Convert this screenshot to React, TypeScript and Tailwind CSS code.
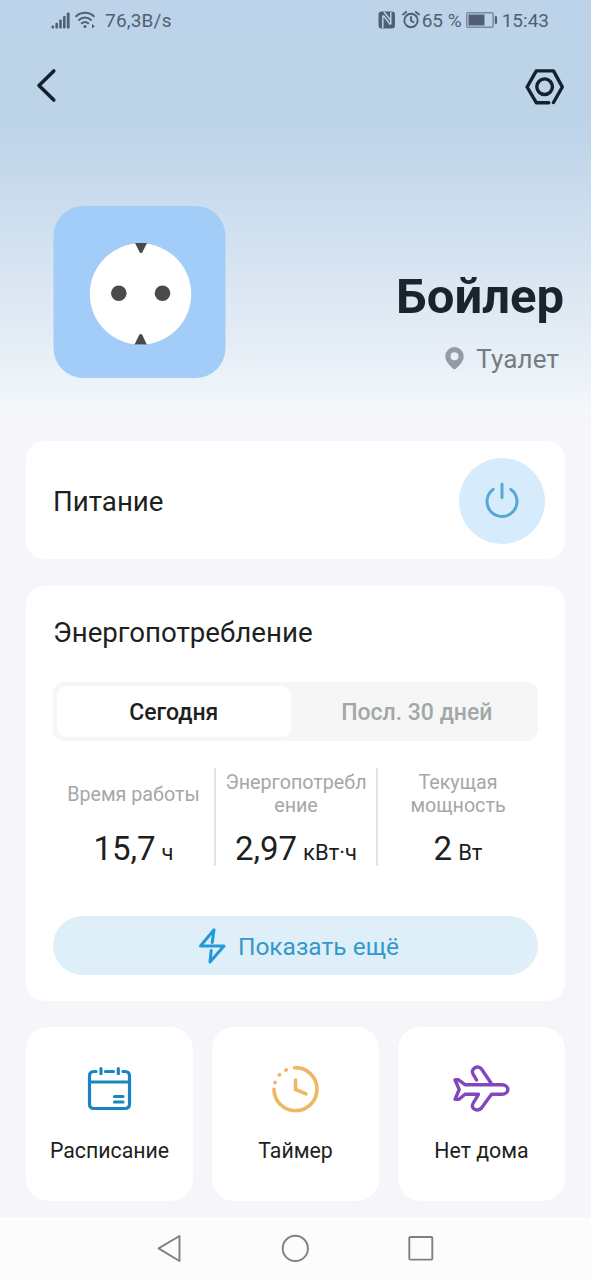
import type { ReactNode } from 'react';

function StatusBar() {
  return (
    <div className="flex h-10 items-center justify-between pr-[42px] pl-[51px] text-[#506072]">
      <div className="flex items-center">
        <svg width="20" height="18" viewBox="0 0 20 18" fill="currentColor">
          <rect x="0.5" y="14.5" width="2.6" height="3" rx="1" />
          <rect x="4.4" y="11.8" width="2.6" height="5.7" rx="1" />
          <rect x="8.2" y="8.6" width="2.6" height="8.9" rx="1" />
          <rect x="12" y="5" width="2.6" height="12.5" rx="1" />
          <rect x="15.8" y="1.5" width="2.8" height="16" rx="1" />
        </svg>
        <svg
          className="ml-1"
          width="21"
          height="18"
          viewBox="0 0 21 18"
          fill="none"
          stroke="currentColor"
          strokeWidth="2"
          strokeLinecap="round"
        >
          <path d="M1.2 5.2a13 13 0 0 1 17.6 0" />
          <path d="M4 8.9a9 9 0 0 1 12 0" />
          <path d="M6.8 12.3a5 5 0 0 1 6.4 0" />
          <circle cx="10" cy="15.6" r="1.5" fill="currentColor" stroke="none" />
          <path d="M17 13v4.5l2.8-2.2z" fill="currentColor" stroke="none" />
        </svg>
        <span className="ml-[9px] text-[19px] leading-none tracking-[0.2px]">
          76,3B/s
        </span>
      </div>

      <div className="flex items-center">
        <svg width="18" height="18" viewBox="0 0 18 18">
          <rect
            x="0.5"
            y="0.5"
            width="16.5"
            height="17"
            rx="3"
            fill="currentColor"
          />
          <path
            d="M4.8 17V4.5M5.3 4.5l7 9M12.8 1v12.5M6 1l6.5 8"
            fill="none"
            stroke="#bdd3e9"
            strokeWidth="1.4"
          />
        </svg>
        <svg
          className="ml-[6px]"
          width="18"
          height="18"
          viewBox="0 0 18 18"
          fill="none"
          stroke="currentColor"
          strokeWidth="1.9"
          strokeLinecap="round"
        >
          <circle cx="9" cy="9.5" r="6.7" />
          <path d="M9 6V9.5l2.4 1.8" />
          <path d="M1 3.5 4.2 1M17 3.5 13.8 1" />
        </svg>
        <span className="ml-0.5 text-[19px] leading-none">65 %</span>
        <svg className="ml-1" width="31" height="16" viewBox="0 0 31 16">
          <rect
            x="0.8"
            y="0.8"
            width="26.4"
            height="14.4"
            rx="1.5"
            fill="none"
            stroke="#7c8c9c"
            strokeWidth="1.5"
          />
          <rect x="2.5" y="2.5" width="16" height="11" fill="currentColor" />
          <rect
            x="28.8"
            y="4"
            width="2.2"
            height="8"
            rx="1"
            fill="currentColor"
          />
        </svg>
        <span className="ml-[5px] text-[19px] leading-none">15:43</span>
      </div>
    </div>
  );
}

function Socket() {
  return (
    <svg width="173" height="173" viewBox="0 0 173 173">
      <rect x="0.5" width="172" height="172" rx="30" fill="#a2cdf9" />
      <circle cx="87.5" cy="88" r="50.7" fill="#fff" />
      <circle cx="65.8" cy="87.2" r="7.8" fill="#4a4a4a" />
      <circle cx="109.5" cy="87.2" r="7.8" fill="#4a4a4a" />
      <path d="M82 37h12l-4.600 9.200q-1.400 1.800-2.800 0z" fill="#4a4a4a" />
      <path d="M81.600 138.400h12.200l-4.600-9.600q-1.500-1.800-3 0z" fill="#4a4a4a" />
    </svg>
  );
}

type StatProps = {
  label: ReactNode;
  value: string;
  unit: string;
};

function Stat({ label, value, unit }: StatProps) {
  return (
    <div className="flex flex-col items-center">
      <div className="flex h-[52px] shrink-0 items-center text-center text-[19.7px] leading-[23px] text-[#a5a7a8]">
        <span className="whitespace-nowrap">{label}</span>
      </div>
      <p className="mt-[9px] leading-[40px] whitespace-nowrap text-[#1d1f20]">
        <span className="text-[33px]">{value}</span>
        <span className="ml-1.5 text-[22px]">{unit}</span>
      </p>
    </div>
  );
}

type TileProps = {
  label: string;
  children: ReactNode;
};

function Tile({ label, children }: TileProps) {
  return (
    <button className="flex h-[174px] w-[167px] flex-col items-center rounded-[22px] bg-white pt-[31px]">
      {children}
      <span className="mt-[15px] text-[21.3px] leading-[28px] whitespace-nowrap text-[#1d1f20]">
        {label}
      </span>
    </button>
  );
}

export default function App() {
  return (
    <div className="flex h-[1280px] w-[591px] flex-col overflow-hidden bg-[#f5f5fa] font-[Roboto,sans-serif]">
      <div className="h-[441px] bg-[linear-gradient(to_bottom,#bdd3e9_0px,#bdd3e8_120px,#d1e1f0_240px,#dee8f3_300px,#e6eef6_350px,#f3f8fb_412px,#f5f5fa_418px)]">
        <StatusBar />

        <header className="flex h-[92px] items-center justify-between pr-[27px] pl-9">
          <svg
            width="22"
            height="36"
            viewBox="0 0 22 36"
            fill="none"
            stroke="#14212d"
            strokeWidth="3.6"
            strokeLinecap="round"
            strokeLinejoin="round"
          >
            <path d="M17.8 3 3 17.5 17.8 32" />
          </svg>
          <svg
            width="40"
            height="38"
            viewBox="0 0 40 38"
            fill="none"
            stroke="#14212d"
            strokeWidth="3.4"
            strokeLinejoin="round"
            strokeLinecap="round"
          >
            <path d="M24.8 35.700H12.300L3.100 20 12.300 3.900h17.200L38.300 20l-8.800 15.500" />
            <circle cx="20.6" cy="19.7" r="7.8" />
          </svg>
        </header>

        <div className="mt-[74px] flex justify-between pr-[27px] pl-[53px]">
          <Socket />
          <div className="flex flex-col items-end pt-[61px]">
            <h1 className="text-[49px] leading-[60px] font-bold text-[#1b242c]">
              Бойлер
            </h1>
            <div className="mt-4 mr-[5px] flex items-center text-[26px] leading-[32px] tracking-[0.1px] text-[#757d83]">
              <svg
                className="mr-3"
                width="20"
                height="24"
                viewBox="0 0 20 24"
                fill="#949ba3"
              >
                <path
                  fillRule="evenodd"
                  d="M10.500 0A9.200 9.200 0 0 0 1.300 9.200c0 5.200 4.400 9.200 7.500 12.200q1.700 1.600 3.400 0C15.300 18.400 19.700 14.400 19.700 9.200A9.200 9.200 0 0 0 10.500 0Zm0 5.200a4 4 0 1 1 0 8 4 4 0 0 1 0-8Z"
                />
              </svg>
              Туалет
            </div>
          </div>
        </div>
      </div>

      <main className="flex flex-col px-[26px]">
        <section className="flex h-[118px] items-center justify-between rounded-[18px] bg-white pr-5 pl-[27px]">
          <h2 className="pt-1 text-[27.7px] text-[#1d1f20]">Питание</h2>
          <button className="mt-px flex size-[86px] items-center justify-center rounded-full bg-[#d6ecfc]">
            <svg
              width="36"
              height="40"
              viewBox="0 0 36 40"
              fill="none"
              stroke="#55a9d6"
              strokeWidth="3"
              strokeLinecap="round"
            >
              <path d="M18 3v13.500" />
              <path d="M9.200 8.400A15 15 0 1 0 26.800 8.400" />
            </svg>
          </button>
        </section>

        <section className="mt-[27px] h-[415px] rounded-[18px] bg-white px-[27px] pt-[27px]">
          <h2 className="text-[27.7px] leading-10 text-[#1d1f20]">
            Энергопотребление
          </h2>

          <div className="mt-[29px] grid h-[59px] grid-cols-2 rounded-xl bg-[#f6f6f7] text-[23px] font-medium">
            <div className="flex py-1 pr-[5px] pl-1">
              <button className="flex-1 rounded-[10px] bg-white pt-1 text-[#1d1f20]">
                Сегодня
              </button>
            </div>
            <button className="pt-1 text-[#a2a7a7]">Посл. 30 дней</button>
          </div>

          <div className="mt-[27px] grid h-[98px] grid-cols-[163px_162px_160px] grid-rows-[98px] divide-x-2 divide-[#e2e2e4]">
            <Stat label="Время работы" value="15,7" unit="ч" />
            <Stat
              label={
                <>
                  Энергопотребл
                  <br />
                  ение
                </>
              }
              value="2,97"
              unit="кВт·ч"
            />
            <Stat
              label={
                <>
                  Текущая
                  <br />
                  мощность
                </>
              }
              value="2"
              unit="Вт"
            />
          </div>

          <button className="mt-[50px] flex h-[59px] w-full items-center justify-center rounded-full bg-[#dfeffa] pt-0.5 pl-1.5 text-[24.5px] text-[#3399c9]">
            <svg
              className="mr-3"
              width="28"
              height="38"
              viewBox="0 0 28 38"
              fill="none"
              stroke="#2499d9"
              strokeWidth="3"
              strokeLinecap="round"
              strokeLinejoin="round"
            >
              <path d="M14.2 14.5 16 1.7 2.5 18H26L12 34l1.2-11.5" />
            </svg>
            <span className="pt-0.5">Показать ещё</span>
          </button>
        </section>

        <section className="mt-[26px] flex justify-between">
          <Tile label="Расписание">
            <svg
              width="64"
              height="64"
              viewBox="0 0 64 64"
              fill="none"
              stroke="#1a85c0"
              strokeWidth="3.2"
              strokeLinecap="round"
            >
              <path d="M18 13.500H16q-4.500 0-4.500 4.500v28q0 4.500 4.500 4.500h31q4.500 0 4.500-4.500v-28Q51.500 13.500 47 13.500h-2" />
              <path d="M27.500 13.500h8M23 10.700v5M40.300 10.700v5M12 24h39M36.500 38.500h8.500M36.500 44h8.500" />
            </svg>
          </Tile>
          <Tile label="Таймер">
            <svg
              width="64"
              height="64"
              viewBox="0 0 64 64"
              fill="none"
              stroke="#eeb761"
              strokeWidth="3.6"
              strokeLinecap="round"
              strokeLinejoin="round"
            >
              <path d="M30.500 9.700A21.500 21.500 0 1 1 10 31.200" />
              <path d="M31.500 22v9.500l10.500 4.300" />
              <path d="M11 24.700v-.5M15.200 17.100l.4-.4M21.800 12.100l.5-.2" />
            </svg>
          </Tile>
          <Tile label="Нет дома">
            <svg
              width="64"
              height="64"
              viewBox="0 0 64 64"
              fill="none"
              stroke="#8247be"
              strokeWidth="3.4"
              strokeLinecap="round"
              strokeLinejoin="round"
            >
              <path d="M26.500 22 23 16c-3-5 4.500-9.500 8.500-5L41 25" />
              <path d="M5 21.800h3.500l6.500 4.900h36.500c8.500 0 8.500 9.600 0 9.600h-10L31.500 50c-4 4.500-11.500.5-8.500-4.500l5.500-9.200H15l-6 5H5l4.200-9.800z" />
            </svg>
          </Tile>
        </section>
      </main>

      <nav className="mt-4 flex h-[63px] items-center bg-[#fcfcfc] pl-[156px]">
        <svg
          width="280"
          height="32"
          viewBox="0 0 280 32"
          fill="none"
          stroke="#808080"
          strokeWidth="1.9"
          strokeLinejoin="round"
        >
          <path d="M2.500 15.400 23.500 3v25z" />
          <circle cx="139.3" cy="15.4" r="12.6" />
          <rect x="253.3" y="4" width="23" height="22.6" rx="1" />
        </svg>
      </nav>
    </div>
  );
}
